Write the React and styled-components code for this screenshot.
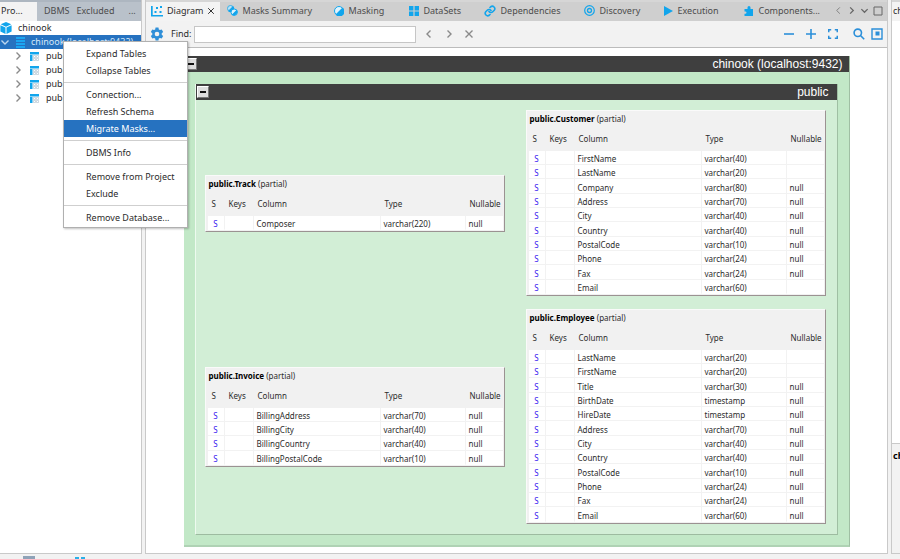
import React from "react";
import styled, { createGlobalStyle, css } from "styled-components";

const GlobalStyle = createGlobalStyle`
    * {
        box-sizing: border-box;
    }
    html,
    body,
    #root {
        height: 100%;
    }
    body {
        margin: 0;
        overflow: hidden;
        background: #f2f2f2;
        color: #2b2b2b;
        font-family: "Noto Sans", "Open Sans", sans-serif;
        font-size: 9px;
        line-height: 14px;
    }
    button,
    input {
        font: inherit;
        color: inherit;
    }
    button {
        padding: 0;
        border: 0;
        background: none;
    }
`;

const Window = styled.div`
    display: flex;
    flex-direction: column;
    height: 100vh;
`;

const Workspace = styled.div`
    display: flex;
    flex: 1;
    gap: 3px;
    min-height: 0;
`;

const Panel = styled.section`
    display: flex;
    flex-direction: column;
    overflow: hidden;
    background: white;
    border: 1px solid #c9c9c9;
    border-top: 0;
`;

const ProjectPanel = styled(Panel)`
    flex: 0 0 142px;
    border-left: 0;
`;

const MainPanel = styled(Panel)`
    flex: 1;
    min-width: 0;
`;

const SidePanel = styled(Panel)`
    flex: 0 0 9px;
    border-right: 0;
    white-space: nowrap;
`;

const TabBar = styled.div`
    display: flex;
    flex: 0 0 21px;
    border-top: 2px solid ${(props) => (props.$blue ? "#adb6c0" : "#d6d6d6")};
    background: ${(props) => (props.$blue ? "#b9c1ca" : "#cfcfcf")};
`;

const Tab = styled.button`
    display: flex;
    align-items: center;
    gap: 4px;
    flex: 0 0 ${(props) => props.$width}px;
    padding: 0 0 2px ${(props) => (props.$side ? 1 : 7)}px;
    color: #4c4c4c;
    white-space: nowrap;
    ${(props) =>
        props.$active &&
        css`
            background: #f3f3f3;
            color: #2b2b2b;
        `}
    ${(props) =>
        props.$closable &&
        css`
            padding: 0 5px 2px;
            svg:last-child {
                margin-left: auto;
            }
        `}
    svg {
        flex: none;
    }
`;

const TabNav = styled.div`
    display: flex;
    align-items: center;
    gap: 4px;
    margin-left: auto;
    padding: 0 4px 2px 0;
    color: #666;
    button,
    svg {
        display: block;
    }
`;

const Tree = styled.ul`
    margin: 0;
    padding: 0;
    list-style: none;
`;

const TreeRow = styled.li`
    display: flex;
    align-items: center;
    height: 14px;
    padding-left: ${(props) => props.$indent}px;
    gap: ${(props) => props.$gap}px;
    white-space: nowrap;
    background: ${(props) => (props.$selected ? "#2672c0" : "transparent")};
    color: ${(props) => (props.$selected ? "#bcd6ee" : "#8a8a8a")};
    span {
        color: ${(props) => (props.$selected ? "#d5e8fa" : "#2b2b2b")};
    }
    svg {
        flex: none;
    }
`;

const Toolbar = styled.div`
    display: flex;
    align-items: center;
    flex: 0 0 27px;
    padding: 0 4px;
    background: #f2f2f2;
    border-bottom: 1px solid #bcbcbc;
    svg {
        display: block;
    }
`;

const FindLabel = styled.label`
    margin: 0 2px 0 7px;
`;

const FindInput = styled.input`
    width: 222px;
    height: 17px;
    padding: 0 4px;
    border: 1px solid #c6c6c6;
    background: white;
    outline: none;
`;

const ToolGroup = styled.div`
    display: flex;
    align-items: center;
    gap: ${(props) => props.$gap}px;
    margin-left: ${(props) => (props.$end ? "auto" : "8px")};
    color: ${(props) => (props.$end ? "#2b8fd9" : "#8a8a8a")};
`;

const ViewTools = styled.div`
    display: flex;
    gap: 6px;
    padding-left: 3px;
`;

const Canvas = styled.div`
    flex: 1;
    padding-top: 8px;
    overflow: hidden;
    background: white;
`;

const Database = styled.div`
    width: fit-content;
    margin: 0 auto;
    background: #c2e8c7;
    border-right: 1px solid #9fbfa3;
    border-bottom: 2px solid #afd2b4;
`;

const DatabaseBody = styled.div`
    padding: 12px 11px 10px;
`;

const Schema = styled.div`
    background: #d2eed6;
    border-left: 1px solid #eefaef;
    border-right: 1px solid #9fbfa3;
    border-bottom: 1px solid #9dbba0;
`;

const TitleBar = styled.div`
    display: flex;
    align-items: center;
    justify-content: space-between;
    height: 16px;
    padding: 0 ${(props) => props.$right}px 0 1px;
    background: #3f3f3f;
    color: white;
    font-family: "Liberation Sans", Arial, sans-serif;
    font-size: 12px;
`;

const Collapse = styled.button`
    display: grid;
    place-items: center;
    width: 12px;
    height: 12px;
    border: 1px solid #777;
    border-top-color: white;
    border-left-color: white;
    background: #dedede;
    &::before {
        content: "";
        width: 6px;
        height: 2px;
        background: #111;
    }
`;

const Nodes = styled.div`
    display: grid;
    grid-template-columns: 300px 300px;
    align-items: center;
    gap: 13px 21px;
    padding: 10px 11px 10px 9px;
`;

const Node = styled.article`
    padding: 0 1px 1px 2px;
    border: 1px solid #9b9292;
    border-top-color: #fafafa;
    border-left-color: #fafafa;
    background: #f1f1f1;
`;

const NodeTitle = styled.h2`
    height: 17px;
    margin: 0;
    padding-left: 1px;
    font-size: 8px;
    font-weight: 400;
    line-height: 16px;
    b {
        color: black;
    }
`;

const NodeTable = styled.table`
    width: 100%;
    table-layout: fixed;
    border-collapse: separate;
    border-spacing: 0;
    font-size: 8px;
    line-height: 11px;
    th {
        height: 23px;
        padding: 0 0 2px 4px;
        font-weight: 400;
        text-align: left;
    }
    td {
        height: 14px;
        padding: 2px 0 0 3px;
        border-bottom: 1px solid #f2f2f2;
        border-right: 1px solid #f2f2f2;
        background: white;
    }
    tr:nth-child(3n) td {
        height: 15px;
    }
    tr:last-child td {
        border-bottom-color: white;
    }
    td:first-child {
        padding-left: 0;
        color: #3a22f0;
        text-align: center;
    }
    td:last-child {
        border-right: 0;
    }
`;

const Col = styled.col`
    width: ${(props) => props.$width};
`;

const ContextMenu = styled.div`
    position: absolute;
    top: 41px;
    left: 63px;
    display: flex;
    flex-direction: column;
    width: 125px;
    padding: 3px 0 1px;
    border: 1px solid #b0b0b0;
    background: white;
    box-shadow: 1px 1px 2px rgba(0, 0, 0, 0.25);
    hr {
        width: 100%;
        height: 1px;
        margin: 3px 0;
        border: 0;
        background: #cfcfcf;
    }
`;

const MenuItem = styled.button`
    height: 17px;
    padding-left: 22px;
    text-align: left;
    line-height: 16px;
    background: ${(props) => (props.$active ? "#2672c0" : "transparent")};
    color: ${(props) => (props.$active ? "white" : "#2b2b2b")};
`;

const SideBody = styled.div`
    flex: 1;
    background: white;
`;

const SideDetails = styled.div`
    flex: 0 0 110px;
    padding: 5px 0 0 1px;
    border-top: 1px solid #c9c9c9;
    background: #f2f2f2;
    color: black;
    font-weight: 700;
`;

const StatusBar = styled.footer`
    display: flex;
    align-items: flex-end;
    gap: 40px;
    flex: 0 0 5px;
    padding-left: 23px;
    svg {
        display: block;
    }
`;

const BLUE = "#12a5ec";

const DiagramIcon = () => (
    <svg width="12" height="12" viewBox="0 0 12 12" fill={BLUE}>
        <path d="M0 1h1.700v9H12v1.500H0z" />
        <path d="M3.500 6h2v2h-2zM5 2h2v2H5zM9 1h2v2H9zM8.500 6h2v2h-2z" />
    </svg>
);

const MaskIcon = () => (
    <svg width="10" height="10" viewBox="0 0 10 10">
        <circle cx="5" cy="5" r="4.500" fill="#dff3fd" stroke={BLUE} />
        <path d="M8.500 1.500A5 5 0 1 1 1.500 8.500z" fill={BLUE} />
    </svg>
);

const MasksIcon = () => (
    <svg width="11" height="11" viewBox="0 0 11 11">
        <circle cx="3.500" cy="3.500" r="3" fill="#b9e2f7" stroke="#3aaee6" />
        <path d="M6 1A3.500 3.500 0 0 1 1 6z" fill={BLUE} />
        <circle cx="7.200" cy="7.200" r="3.200" fill="#dff3fd" stroke={BLUE} />
        <path d="M9.700 4.700A3.600 3.600 0 0 1 4.700 9.700z" fill={BLUE} />
    </svg>
);

const DataSetsIcon = () => (
    <svg width="10" height="10" viewBox="0 0 10 10" fill={BLUE}>
        <path d="M0 0h4.400v4.400H0zM5.600 0H10v4.400H5.600zM0 5.600h4.400V10H0zM5.600 5.600H10V10H5.600z" />
    </svg>
);

const LinkIcon = () => (
    <svg width="12" height="12" viewBox="0 0 24 24" fill="none" stroke={BLUE} strokeWidth="3.200" strokeLinecap="round">
        <path d="M10 13a5 5 0 0 0 7.500.5l3-3a5 5 0 0 0-7-7L12 5" />
        <path d="M14 11a5 5 0 0 0-7.500-.5l-3 3a5 5 0 0 0 7 7L12 19" />
    </svg>
);

const TargetIcon = () => (
    <svg width="11" height="11" viewBox="0 0 11 11" fill="none" stroke={BLUE}>
        <circle cx="5.500" cy="5.500" r="4.800" strokeWidth="1.200" />
        <circle cx="5.500" cy="5.500" r="2" strokeWidth="1.300" />
    </svg>
);

const PlayIcon = () => (
    <svg width="9" height="10" viewBox="0 0 9 10" fill={BLUE}>
        <path d="M0 0l9 5-9 5z" />
    </svg>
);

const PuzzleIcon = () => (
    <svg width="10" height="10" viewBox="0 0 10 10" fill={BLUE}>
        <path d="M3.500 3V1.600a1.500 1.500 0 0 1 3 0V3H9v7H.5V7.800h.8a1.200 1.200 0 0 0 0-2.400H.5V3z" />
    </svg>
);

const GearIcon = () => (
    <svg width="14" height="14" viewBox="0 0 24 24" fill="#2f8fd8">
        <path
            fillRule="evenodd"
            d="M9.500 1h5l.6 3.200 2 1.100 3-1.100 2.500 4.300-2.500 2.200v2.600l2.500 2.200-2.500 4.300-3-1.100-2 1.100-.6 3.200h-5l-.6-3.200-2-1.100-3 1.100-2.500-4.300 2.500-2.200v-2.600L1.400 8.500l2.500-4.300 3 1.100 2-1.100zM12 8a4 4 0 1 0 0 8 4 4 0 0 0 0-8z"
        />
    </svg>
);

const Stroke = ({ d, size = 10, width = 1.4 }) => (
    <svg width={size} height={size} viewBox="0 0 10 10" fill="none" stroke="currentColor" strokeWidth={width}>
        <path d={d} />
    </svg>
);

const LEFT = "M6.500 1.500L3 5l3.500 3.500";
const RIGHT = "M3.500 1.500L7 5 3.500 8.500";
const DOWN = "M1.500 3.500L5 7l3.500-3.500";
const CROSS = "M1.500 1.500l7 7M8.500 1.500l-7 7";

const SearchIcon = () => (
    <svg width="12" height="12" viewBox="0 0 12 12" fill="none" stroke="currentColor" strokeWidth="1.600">
        <circle cx="4.800" cy="4.800" r="3.700" />
        <path d="M7.500 7.500l3.700 3.700" />
    </svg>
);

const OverviewIcon = () => (
    <svg width="12" height="12" viewBox="0 0 12 12" fill="none" stroke="currentColor" strokeWidth="1.400">
        <path d="M1 1h10v10H1z" />
        <path d="M4.500 3.500h4v4h-4z" fill="currentColor" stroke="none" />
    </svg>
);

const CubeIcon = () => (
    <svg width="12" height="12" viewBox="0 0 12 12" fill={BLUE}>
        <path d="M6 0l5.300 2.300L6 4.700.7 2.300zM.4 3.200l5.100 2.300V12L.4 9.500zM11.600 3.200L6.500 5.500V12l5.100-2.500z" />
    </svg>
);

const DatabaseIcon = () => (
    <svg width="9" height="11" viewBox="0 0 9 11" fill="#1ba6f2">
        <path d="M0 0h9v2H0zM0 3h9v2H0zM0 6h9v2H0zM0 9h9v2H0z" />
    </svg>
);

const TableIcon = () => (
    <svg width="9" height="9" viewBox="0 0 9 9">
        <path d="M0 0h9v2.500H0zM0 3h2.500v6H0z" fill={BLUE} />
        <path d="M3.500 3.500h2v2h-2zM6.500 3.500h2v2h-2zM3.500 6.500h2v2h-2zM6.500 6.500h2v2h-2z" fill="none" stroke="#a9bccb" strokeWidth=".6" />
    </svg>
);

const tabs = [
    { name: "Diagram", icon: <DiagramIcon />, width: 73, active: true },
    { name: "Masks Summary", icon: <MasksIcon />, width: 107 },
    { name: "Masking", icon: <MaskIcon />, width: 75 },
    { name: "DataSets", icon: <DataSetsIcon />, width: 75 },
    { name: "Dependencies", icon: <LinkIcon />, width: 100 },
    { name: "Discovery", icon: <TargetIcon />, width: 80 },
    { name: "Execution", icon: <PlayIcon />, width: 80 },
    { name: "Components...", icon: <PuzzleIcon />, width: 86 },
];

const tables = [
    { name: "public.Track", columns: [["Composer", "varchar(220)", "null"]] },
    {
        name: "public.Customer",
        columns: [
            ["FirstName", "varchar(40)", ""],
            ["LastName", "varchar(20)", ""],
            ["Company", "varchar(80)", "null"],
            ["Address", "varchar(70)", "null"],
            ["City", "varchar(40)", "null"],
            ["Country", "varchar(40)", "null"],
            ["PostalCode", "varchar(10)", "null"],
            ["Phone", "varchar(24)", "null"],
            ["Fax", "varchar(24)", "null"],
            ["Email", "varchar(60)", ""],
        ],
    },
    {
        name: "public.Invoice",
        columns: [
            ["BillingAddress", "varchar(70)", "null"],
            ["BillingCity", "varchar(40)", "null"],
            ["BillingCountry", "varchar(40)", "null"],
            ["BillingPostalCode", "varchar(10)", "null"],
        ],
    },
    {
        name: "public.Employee",
        columns: [
            ["LastName", "varchar(20)", ""],
            ["FirstName", "varchar(20)", ""],
            ["Title", "varchar(30)", "null"],
            ["BirthDate", "timestamp", "null"],
            ["HireDate", "timestamp", "null"],
            ["Address", "varchar(70)", "null"],
            ["City", "varchar(40)", "null"],
            ["Country", "varchar(40)", "null"],
            ["PostalCode", "varchar(10)", "null"],
            ["Phone", "varchar(24)", "null"],
            ["Fax", "varchar(24)", "null"],
            ["Email", "varchar(60)", "null"],
        ],
    },
];

const menuGroups = [
    ["Expand Tables", "Collapse Tables"],
    ["Connection...", "Refresh Schema", "Migrate Masks..."],
    ["DBMS Info"],
    ["Remove from Project", "Exclude"],
    ["Remove Database..."],
];

const TableNode = ({ name, columns }) => (
    <Node>
        <NodeTitle>
            <b>{name}</b> (partial)
        </NodeTitle>
        <NodeTable>
            <colgroup>
                <Col $width="17px" />
                <Col $width="29px" />
                <Col $width="auto" />
                <Col $width="85px" />
                <Col $width="37px" />
            </colgroup>
            <thead>
                <tr>
                    <th>S</th>
                    <th>Keys</th>
                    <th>Column</th>
                    <th>Type</th>
                    <th>Nullable</th>
                </tr>
            </thead>
            <tbody>
                {columns.map(([column, type, nullable]) => (
                    <tr key={column}>
                        <td>S</td>
                        <td></td>
                        <td>{column}</td>
                        <td>{type}</td>
                        <td>{nullable}</td>
                    </tr>
                ))}
            </tbody>
        </NodeTable>
    </Node>
);

const Menu = () => (
    <ContextMenu role="menu">
        {menuGroups.map((group, index) => (
            <React.Fragment key={group[0]}>
                {index > 0 && <hr />}
                {group.map((item) => (
                    <MenuItem key={item} role="menuitem" $active={item === "Migrate Masks..."}>
                        {item}
                    </MenuItem>
                ))}
            </React.Fragment>
        ))}
    </ContextMenu>
);

const Project = () => (
    <ProjectPanel>
        <TabBar $blue>
            <Tab $active $side $width={37}>Pro...</Tab>
            <Tab $width={32}>DBMS</Tab>
            <Tab $width={58}>Excluded</Tab>
            <Tab $side $width={14}>...</Tab>
        </TabBar>
        <Tree>
            <TreeRow $indent={0} $gap={6}>
                <CubeIcon /> <span>chinook</span>
            </TreeRow>
            <TreeRow $indent={0} $gap={6} $selected>
                <Stroke d={DOWN} /> <DatabaseIcon /> <span>chinook (localhost:9432)</span>
            </TreeRow>
            {[1, 2, 3, 4].map((schema) => (
                <TreeRow key={schema} $indent={13} $gap={7}>
                    <Stroke d={RIGHT} /> <TableIcon /> <span>public</span>
                </TreeRow>
            ))}
        </Tree>
    </ProjectPanel>
);

const Main = () => (
    <MainPanel>
        <TabBar>
            {tabs.map(({ name, icon, width, active }) => (
                <Tab key={name} $active={active} $closable={active} $width={width}>
                    {icon}
                    {name}
                    {active && <Stroke d={CROSS} size={8} width={1.2} />}
                </Tab>
            ))}
            <TabNav>
                <button aria-label="Previous tab"><Stroke d={LEFT} size={9} width={0.8} /></button>
                <button aria-label="Next tab"><Stroke d={RIGHT} size={9} /></button>
                <button aria-label="All tabs"><Stroke d={DOWN} size={9} /></button>
                <button aria-label="Maximize"><Stroke d="M1 1h8v8H1z" size={10} width={1} /></button>
            </TabNav>
        </TabBar>
        <Toolbar>
            <button aria-label="Settings"><GearIcon /></button>
            <FindLabel htmlFor="find">Find:</FindLabel>
            <FindInput id="find" />
            <ToolGroup $gap={10}>
                <button aria-label="Previous match"><Stroke d={LEFT} /></button>
                <button aria-label="Next match"><Stroke d={RIGHT} /></button>
                <button aria-label="Clear"><Stroke d={CROSS} /></button>
            </ToolGroup>
            <ToolGroup $end $gap={12}>
                <button aria-label="Zoom out"><Stroke d="M0 5h10" width={1.6} /></button>
                <button aria-label="Zoom in"><Stroke d="M0 5h10M5 0v10" width={1.6} /></button>
                <button aria-label="Fit">
                    <Stroke d="M.7 3.200V.7h2.500M6.800.7h2.500v2.500M9.300 6.800v2.500H6.800M3.200 9.300H.7V6.800" width={1.6} />
                </button>
                <ViewTools>
                    <button aria-label="Search"><SearchIcon /></button>
                    <button aria-label="Overview"><OverviewIcon /></button>
                </ViewTools>
            </ToolGroup>
        </Toolbar>
        <Canvas>
            <Database>
                <TitleBar $right={6}>
                    <Collapse aria-label="Collapse database" />
                    chinook (localhost:9432)
                </TitleBar>
                <DatabaseBody>
                    <Schema>
                        <TitleBar $right={8}>
                            <Collapse aria-label="Collapse schema" />
                            public
                        </TitleBar>
                        <Nodes>
                            {tables.map((table) => (
                                <TableNode key={table.name} {...table} />
                            ))}
                        </Nodes>
                    </Schema>
                </DatabaseBody>
            </Database>
        </Canvas>
    </MainPanel>
);

const App = () => {
    return (
        <>
            <GlobalStyle />
            <Window>
                <Workspace>
                    <Project />
                    <Main />
                    <SidePanel>
                        <TabBar>
                            <Tab $active $side $width={40}>chinook</Tab>
                        </TabBar>
                        <SideBody />
                        <SideDetails>chinook</SideDetails>
                    </SidePanel>
                </Workspace>
                <StatusBar>
                    <svg width="12" height="3" viewBox="0 0 12 3">
                        <path d="M0 0h12v3H0z" fill="#8fa3b8" />
                    </svg>
                    <svg width="10" height="2" viewBox="0 0 10 2">
                        <path d="M0 0h4v2H0zM6 0h4v2H6z" fill="#2bb0e8" />
                    </svg>
                </StatusBar>
            </Window>
            <Menu />
        </>
    );
};

export default App;
